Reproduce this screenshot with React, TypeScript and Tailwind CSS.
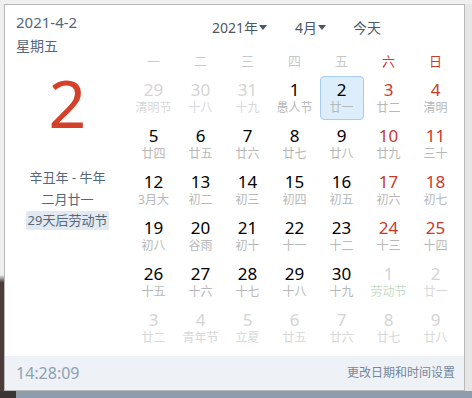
import React from 'react';

interface DayCell {
  day: number;
  lunar: string;
  muted?: boolean; // outside the current month
  fest?: boolean; // festival label in next month
}

const WEEK = ['一', '二', '三', '四', '五', '六', '日'];

const ROWS: DayCell[][] = [
  [
    { day: 29, lunar: '清明节', muted: true },
    { day: 30, lunar: '十八', muted: true },
    { day: 31, lunar: '十九', muted: true },
    { day: 1, lunar: '愚人节' },
    { day: 2, lunar: '廿一' },
    { day: 3, lunar: '廿二' },
    { day: 4, lunar: '清明' },
  ],
  [
    { day: 5, lunar: '廿四' },
    { day: 6, lunar: '廿五' },
    { day: 7, lunar: '廿六' },
    { day: 8, lunar: '廿七' },
    { day: 9, lunar: '廿八' },
    { day: 10, lunar: '廿九' },
    { day: 11, lunar: '三十' },
  ],
  [
    { day: 12, lunar: '3月大' },
    { day: 13, lunar: '初二' },
    { day: 14, lunar: '初三' },
    { day: 15, lunar: '初四' },
    { day: 16, lunar: '初五' },
    { day: 17, lunar: '初六' },
    { day: 18, lunar: '初七' },
  ],
  [
    { day: 19, lunar: '初八' },
    { day: 20, lunar: '谷雨' },
    { day: 21, lunar: '初十' },
    { day: 22, lunar: '十一' },
    { day: 23, lunar: '十二' },
    { day: 24, lunar: '十三' },
    { day: 25, lunar: '十四' },
  ],
  [
    { day: 26, lunar: '十五' },
    { day: 27, lunar: '十六' },
    { day: 28, lunar: '十七' },
    { day: 29, lunar: '十八' },
    { day: 30, lunar: '十九' },
    { day: 1, lunar: '劳动节', muted: true, fest: true },
    { day: 2, lunar: '廿一', muted: true },
  ],
  [
    { day: 3, lunar: '廿二', muted: true },
    { day: 4, lunar: '青年节', muted: true },
    { day: 5, lunar: '立夏', muted: true },
    { day: 6, lunar: '廿五', muted: true },
    { day: 7, lunar: '廿六', muted: true },
    { day: 8, lunar: '廿七', muted: true },
    { day: 9, lunar: '廿八', muted: true },
  ],
];

const Caret = () => (
  <svg width="8" height="5" viewBox="0 0 8 5" className="ml-[1px] mt-[1px]">
    <path d="M0 0h8L4 5z" fill="#4a5866" />
  </svg>
);

const Cell: React.FC<{ cell: DayCell; col: number; selected: boolean }> = ({ cell, col, selected }) => {
  const weekend = col >= 5;
  let numColor = 'text-black';
  if (cell.muted) numColor = 'text-[#d4d4d4]';
  else if (weekend) numColor = 'text-[#c83a2c]';
  let lunarColor = 'text-[#b8b8b8]';
  if (cell.muted) lunarColor = cell.fest ? 'text-[#c6dcc6]' : 'text-[#d8d8d8]';

  return (
    <div className="flex h-[46px] items-center justify-center">
      <div
        className={`flex h-[44px] w-[44px] flex-col items-center justify-center rounded-[4px] border ${
          selected ? 'border-[#a8cdee] bg-[#dcedfb]' : 'border-transparent'
        }`}
      >
        <span className={`text-[17px] leading-[18px] ${numColor}`}>{cell.day}</span>
        <span className={`mt-[2px] text-[12px] leading-[14px] ${lunarColor}`}>{cell.lunar}</span>
      </div>
    </div>
  );
};

export default function App() {
  return (
    <div
      className="flex h-[398px] w-[472px] flex-col overflow-hidden bg-[#ececec]"
      style={{ fontFamily: '"Noto Sans", "Noto Sans CJK SC", sans-serif' }}
    >
      <div className="h-[4px] shrink-0 bg-[#f0f0f0]" />
      <div className="flex min-h-0 flex-1">
        <div className="w-[4px] shrink-0 bg-gradient-to-b from-[#efefef] from-70% to-[#4b3c3a] to-72%" />
        <div className="flex w-[461px] shrink-0 flex-col border border-[#b9b9b9] bg-white">
          <div className="flex flex-1">
            {/* left info column */}
            <div className="flex w-[125px] shrink-0 flex-col">
              <div className="ml-[11px] mt-[7px] text-[15px] leading-[20px] text-[#55677a]">2021-4-2</div>
              <div className="ml-[11px] mt-[4px] text-[14px] leading-[20px] text-[#55677a]">星期五</div>
              <div className="mt-[6px] text-center text-[66px] leading-[80px] text-[#d4402a]">2</div>
              <div className="mt-[26px] text-center text-[13px] leading-[18px] text-[#55677a]">辛丑年 - 牛年</div>
              <div className="mt-[4px] text-center text-[13px] leading-[18px] text-[#55677a]">二月廿一</div>
              <div className="mt-[3px] self-center rounded-[2px] bg-[#e3e9f0] px-[2px] text-[13px] leading-[19px] text-[#55677a]">
                29天后劳动节
              </div>
            </div>

            {/* calendar */}
            <div className="flex flex-1 flex-col">
              <div className="ml-[82px] mt-[12px] flex h-[20px] items-center text-[14px] text-[#4a5866]">
                <span className="flex items-center">
                  2021年
                  <Caret />
                </span>
                <span className="ml-[28px] flex items-center">
                  4月
                  <Caret />
                </span>
                <span className="ml-[27px]">今天</span>
              </div>
              <div className="mt-[15px] grid w-[329px] grid-cols-7 text-[13px] leading-[18px]">
                {WEEK.map((w, i) => (
                  <div key={w} className={`text-center ${i >= 5 ? 'text-[#c83a2c]' : 'text-[#c8c8c8]'}`}>
                    {w}
                  </div>
                ))}
              </div>
              <div className="mt-[5px] grid w-[329px] grid-cols-7">
                {ROWS.map((row, r) =>
                  row.map((cell, c) => (
                    <Cell key={`${r}-${c}`} cell={cell} col={c} selected={r === 0 && c === 4} />
                  )),
                )}
              </div>
            </div>
          </div>

          {/* footer */}
          <div className="flex h-[34px] shrink-0 items-center justify-between bg-[#eef2f6] pl-[11px] pr-[9px]">
            <span className="text-[16px] text-[#8ca1b6]">14:28:09</span>
            <span className="text-[12px] text-[#76879a]">更改日期和时间设置</span>
          </div>
        </div>
        <div className="flex-1 bg-[#e6e6e6]" />
      </div>
      <div className="flex h-[7px] shrink-0">
        <div className="w-[16px] bg-[#3b3434]" />
        <div className="flex-1 bg-[#8f9cab]" />
      </div>
    </div>
  );
}
